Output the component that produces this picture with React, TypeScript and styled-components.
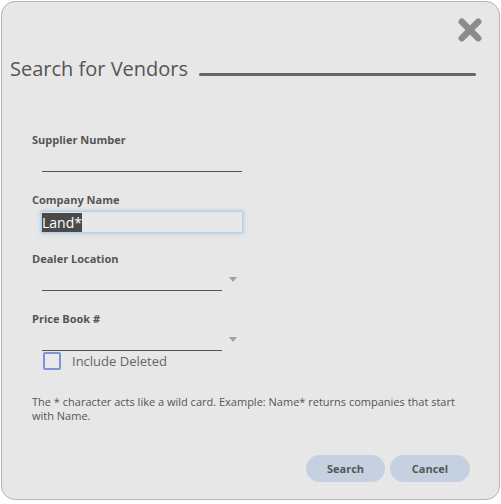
import React, { useEffect, useRef } from 'react';
import styled, { createGlobalStyle } from 'styled-components';

const GlobalStyle = createGlobalStyle`
  html, body {
    margin: 0;
    padding: 0;
    background: #ffffff;
    font-family: "Open Sans", "Liberation Sans", sans-serif;
  }
  * {
    box-sizing: border-box;
  }
`;

const Dialog = styled.div`
  margin: 1px 0 0 1px;
  width: 499px;
  height: 499px;
  background: #e7e7e7;
  border: 1px solid #b4b4b4;
  border-radius: 14px;
  display: flex;
  flex-direction: column;
  overflow: hidden;
`;

const CloseRow = styled.div`
  display: flex;
  justify-content: flex-end;
  padding: 16px 17px 0 0;
`;

const CloseButton = styled.button`
  width: 24px;
  height: 24px;
  padding: 0;
  border: none;
  background: transparent;
  cursor: pointer;
  display: flex;
`;

const TitleRow = styled.div`
  display: flex;
  align-items: flex-start;
  margin-top: 13px;
  padding: 0 23px 0 8px;
`;

const Title = styled.h2`
  margin: 0;
  font-size: 20px;
  line-height: 27px;
  font-weight: 400;
  color: #555555;
  white-space: nowrap;
`;

const Rule = styled.div`
  flex: 1;
  height: 3px;
  margin: 18px 0 0 11px;
  background: #666666;
  border-radius: 2px;
`;

const Body = styled.div`
  margin-top: 50px;
  padding: 0 29px 0 30px;
  display: flex;
  flex-direction: column;
  flex: 1;
`;

const Field = styled.div<{ $height: number }>`
  height: ${({ $height }) => $height}px;
  display: flex;
  flex-direction: column;
`;

const Label = styled.label`
  font-size: 11px;
  line-height: 15px;
  font-weight: 700;
  color: #555555;
`;

const Control = styled.div`
  margin: 4px 0 0 10px;
  display: flex;
  align-items: center;
`;

const LineInput = styled.input<{ $width: number }>`
  width: ${({ $width }) => $width}px;
  height: 21px;
  padding: 0 1px;
  border: none;
  border-bottom: 1px solid #555555;
  background: transparent;
  font-family: inherit;
  font-size: 14px;
  color: #333333;
  outline: none;
`;

const FocusInput = styled.input`
  width: 202px;
  height: 22px;
  margin-left: -1px;
  padding: 0;
  border: 1px solid #b9cde3;
  background: #e8e8e8;
  box-shadow: 0 0 4px rgba(110, 160, 215, 0.55);
  font-family: inherit;
  font-size: 14px;
  color: #333333;
  outline: none;

  &::selection {
    background: #4a4a4a;
    color: #ffffff;
  }
`;

const SelectLine = styled.div`
  width: 180px;
  height: 21px;
  border-bottom: 1px solid #555555;
`;

const Caret = styled.span`
  width: 0;
  height: 0;
  margin: -3px 0 0 7px;
  border-left: 4px solid transparent;
  border-right: 4px solid transparent;
  border-top: 5px solid #9ba88d;
`;

const CheckRow = styled.label`
  display: flex;
  align-items: center;
  margin: -19px 0 0 11px;
  font-size: 13px;
  color: #666666;
  cursor: pointer;
`;

const CheckBox = styled.span`
  width: 18px;
  height: 18px;
  border: 2px solid #7e94d4;
  border-radius: 2px;
  background: #e9e9e9;
  margin-right: 11px;
`;

const Help = styled.p`
  margin: 25px 0 0 0;
  font-size: 11px;
  line-height: 14px;
  color: #555555;
`;

const Actions = styled.div`
  margin-top: auto;
  padding: 0 0 17px 0;
  display: flex;
  justify-content: flex-end;
  gap: 5px;
`;

const Button = styled.button<{ $width: number }>`
  width: ${({ $width }) => $width}px;
  height: 27px;
  border: none;
  border-radius: 14px;
  background: #c5d0e0;
  font-family: inherit;
  font-size: 11px;
  font-weight: 700;
  color: #555555;
  cursor: pointer;
`;

const CloseIcon = () => (
  <svg width="24" height="24" viewBox="0 0 24 24">
    <g stroke="#8c8c8c" strokeWidth="6.5" strokeLinecap="round">
      <line x1="3.8" y1="3.8" x2="20.2" y2="20.2" />
      <line x1="20.2" y1="3.8" x2="3.8" y2="20.2" />
    </g>
  </svg>
);

export default function App() {
  const nameRef = useRef<HTMLInputElement>(null);

  useEffect(() => {
    nameRef.current?.focus();
    nameRef.current?.select();
  }, []);

  return (
    <>
      <GlobalStyle />
      <Dialog>
        <CloseRow>
          <CloseButton aria-label="Close">
            <CloseIcon />
          </CloseButton>
        </CloseRow>
        <TitleRow>
          <Title>Search for Vendors</Title>
          <Rule />
        </TitleRow>
        <Body>
          <Field $height={60}>
            <Label>Supplier Number</Label>
            <Control>
              <LineInput $width={200} />
            </Control>
          </Field>
          <Field $height={59}>
            <Label>Company Name</Label>
            <Control>
              <FocusInput ref={nameRef} defaultValue="Land*" />
            </Control>
          </Field>
          <Field $height={60}>
            <Label>Dealer Location</Label>
            <Control>
              <SelectLine />
              <Caret />
            </Control>
          </Field>
          <Field $height={60}>
            <Label>Price Book #</Label>
            <Control>
              <SelectLine />
              <Caret />
            </Control>
          </Field>
          <CheckRow>
            <CheckBox />
            Include Deleted
          </CheckRow>
          <Help>
            The * character acts like a wild card. Example: Name* returns companies that start with Name.
          </Help>
          <Actions>
            <Button $width={79}>Search</Button>
            <Button $width={80}>Cancel</Button>
          </Actions>
        </Body>
      </Dialog>
    </>
  );
}
